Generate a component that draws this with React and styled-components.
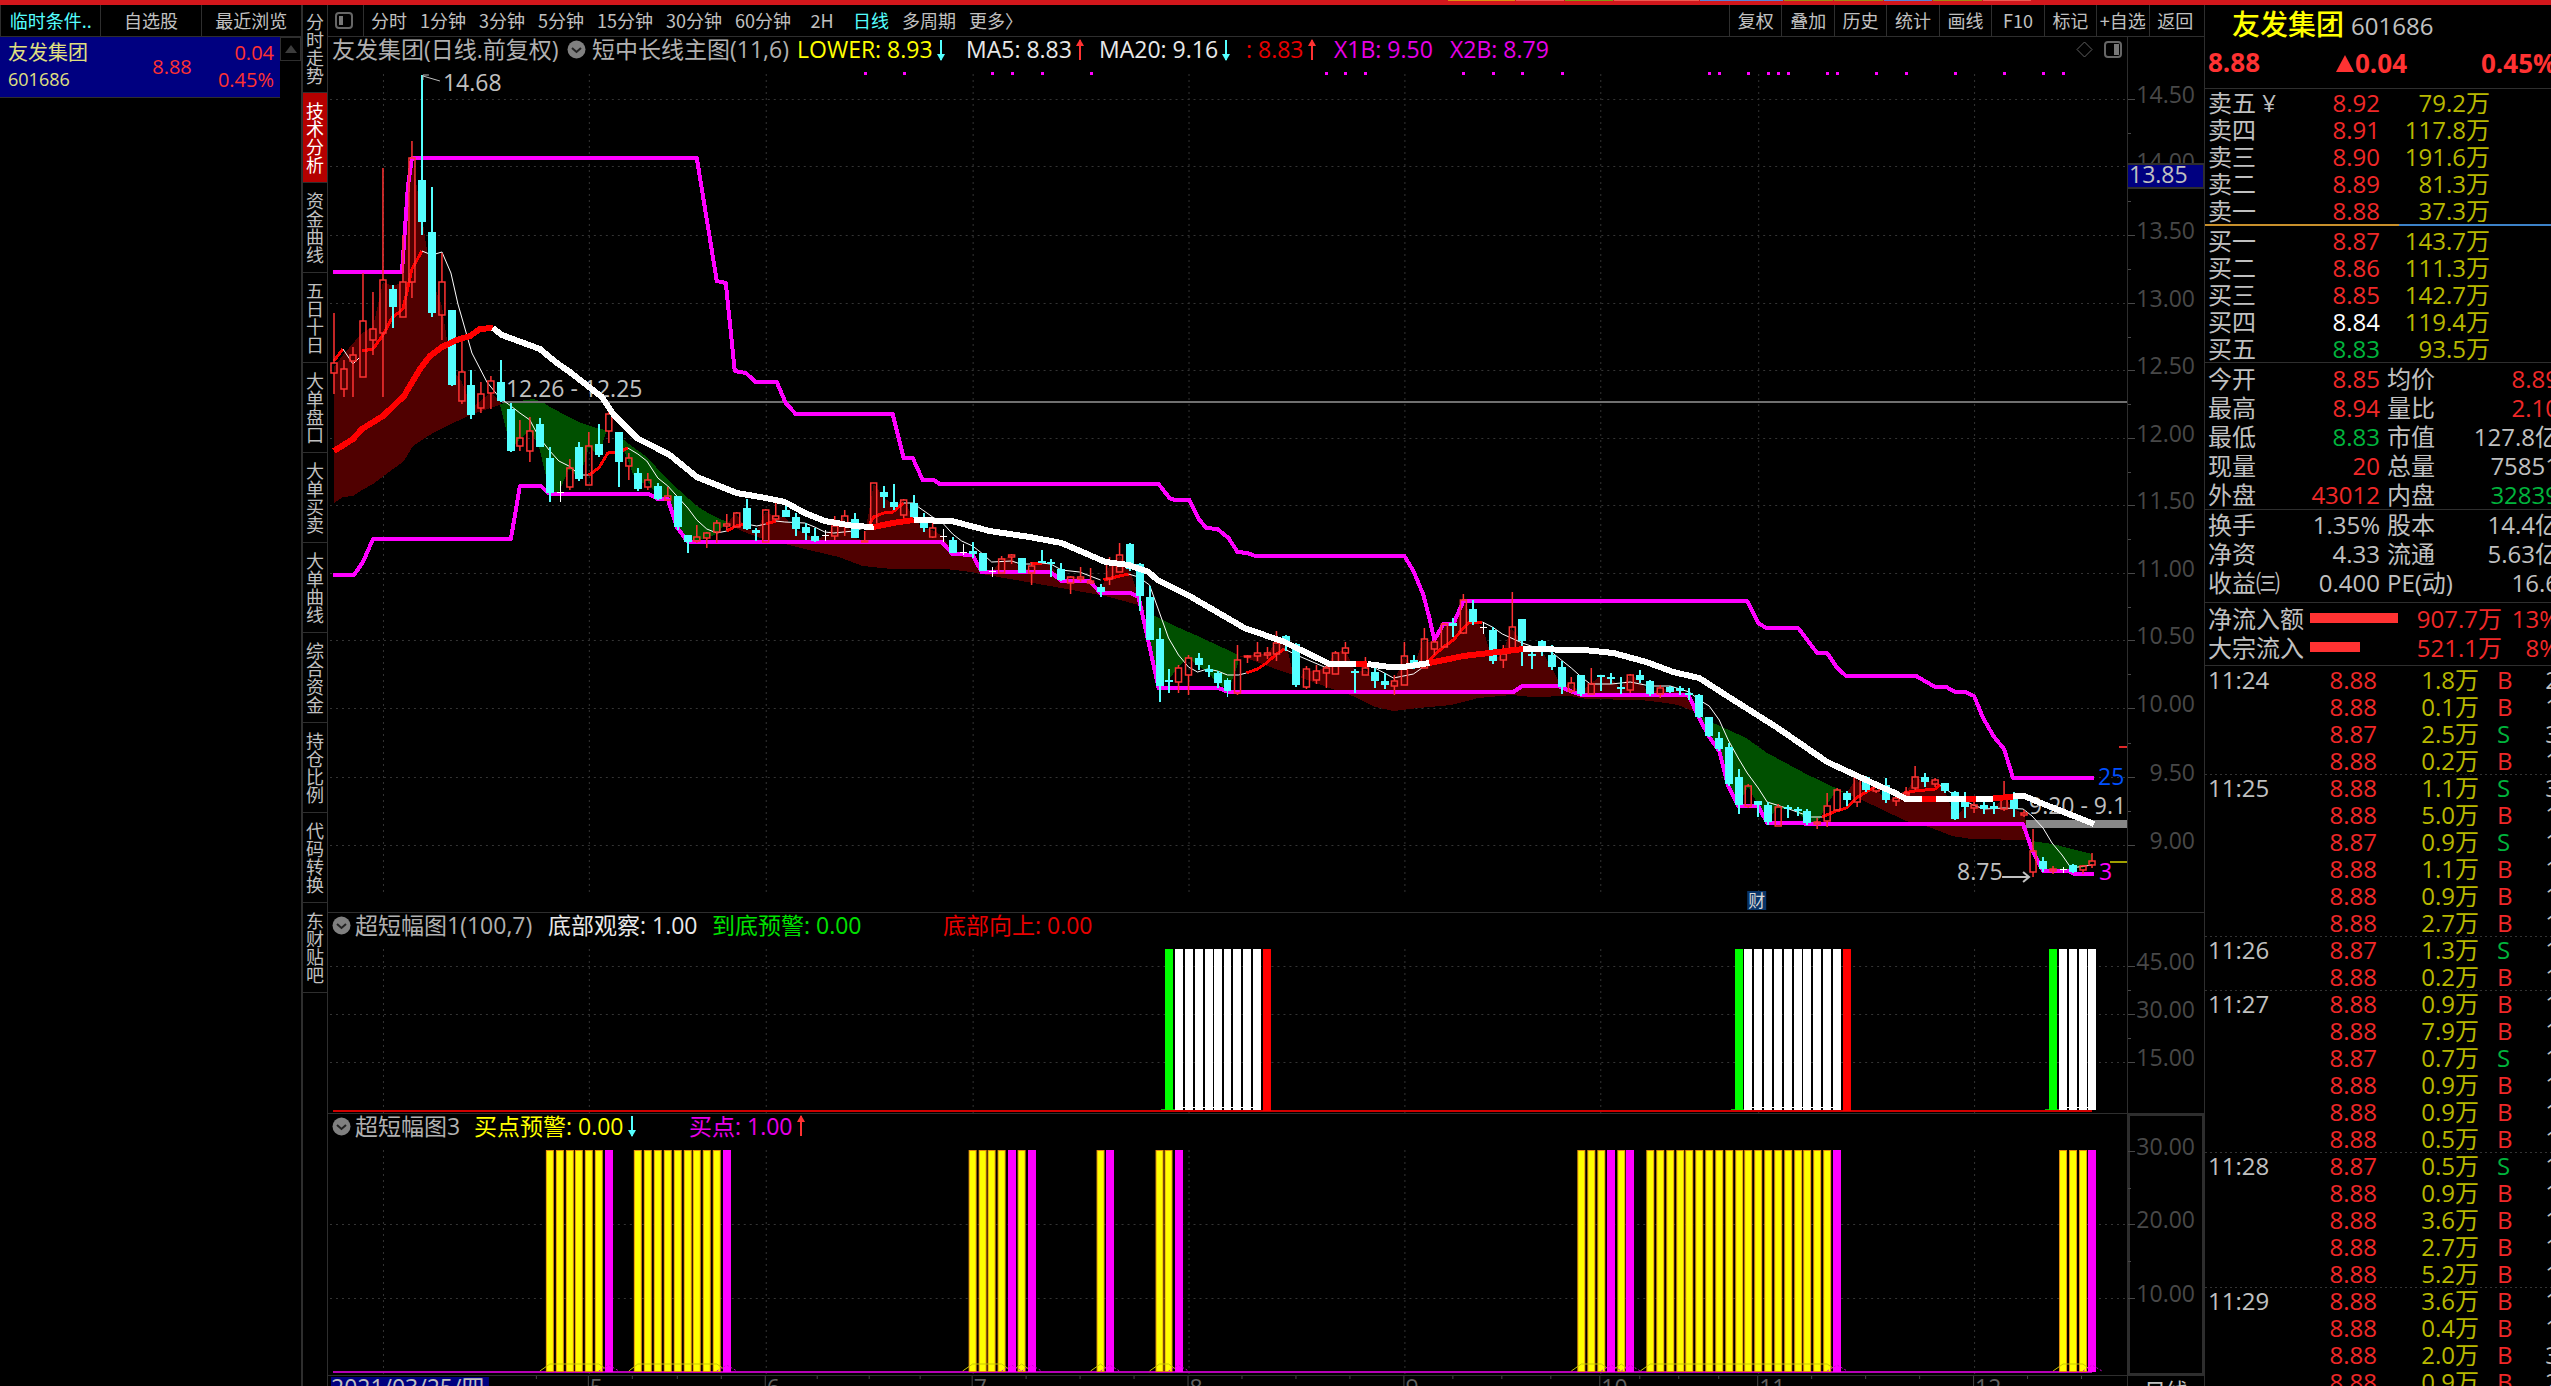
import React from "react";
import styled, { createGlobalStyle } from "styled-components";

const color = {
  text: "#c0c0c0",
  dim: "#484848",
  line: "#2e2e2e",
  red: "#ff3232",
  pureRed: "#ff0000",
  green: "#00b43c",
  lime: "#00e000",
  yellow: "#ffff00",
  olive: "#b8b800",
  cyan: "#54ffff",
  magenta: "#ff00ff",
  navy: "#000080",
  white: "#ffffff",
};

const sans = `"Open Sans", "Noto Sans CJK SC", sans-serif`;
const cjk = `"Noto Sans CJK SC", sans-serif`;

const GlobalStyle = createGlobalStyle`
  * { box-sizing: border-box; }
  body { margin: 0; background: #000; color: ${color.text}; font-family: ${sans}; overflow: hidden; }
  button { font: inherit; color: inherit; background: none; border: 0; padding: 0; margin: 0; cursor: pointer; }
  table { border-collapse: collapse; border-spacing: 0; }
  td, th { padding: 0; font-weight: 400; white-space: nowrap; }
`;

/* ---------- shell ---------- */

const Screen = styled.div`
  display: flex;
  flex-direction: column;
  height: 100vh;
  overflow: hidden;
`;
const Strip = styled.div`
  display: flex;
  justify-content: flex-end;
  gap: 1px;
  flex: none;
  height: 5px;
  padding-right: 520px;
  background: #d2171c;
`;
const StripMark = styled.span`
  width: ${(p) => p.$w}px;
  height: 1px;
  background: ${(p) => p.$c};
`;
const Body = styled.div`
  display: grid;
  grid-template-columns: 301px 27px minmax(0, 1fr) 347px;
  flex: 1;
  min-height: 0;
`;

/* ---------- watch list ---------- */

const Watch = styled.aside`
  min-width: 0;
`;
const WatchTabs = styled.div`
  display: grid;
  grid-template-columns: repeat(3, 1fr);
  height: 32px;
  border-bottom: 1px solid ${color.line};
`;
const WatchTab = styled.button`
  border-left: 1px solid ${color.line};
  padding-bottom: 2px;
  font-family: ${cjk};
  font-size: 18px;
  line-height: 28px;
  color: ${(p) => (p.$on ? color.cyan : color.text)};
  white-space: nowrap;
`;
const WatchBody = styled.div`
  display: flex;
`;
const WatchRow = styled.div`
  display: grid;
  grid-template-columns: 134px 60px 1fr;
  align-items: center;
  flex: 1;
  height: 61px;
  padding: 2px 6px 4px 8px;
  background: ${color.navy};
  border-bottom: 1px solid ${color.line};
  font-size: 20px;
  line-height: 27px;
`;
const WatchCell = styled.div`
  color: ${(p) => p.$c};
  text-align: ${(p) => p.$align || "left"};
`;
const Code = styled.div`
  font-size: 18px;
`;
const ScrollUp = styled.button`
  width: 21px;
  height: 24px;
  border: 1px solid ${color.line};
  display: grid;
  place-items: center;
`;

/* ---------- vertical nav ---------- */

const SideNav = styled.nav`
  display: flex;
  flex-direction: column;
  border-left: 2px solid ${color.line};
  border-right: 1px solid ${color.line};
  overflow: hidden;
`;
const SideItem = styled.button`
  display: flex;
  align-items: center;
  justify-content: center;
  flex: none;
  height: ${(p) => (p.$first ? 88 : 90)}px;
  border-bottom: 1px solid ${color.line};
  background: ${(p) => (p.$on ? "#b40000" : "transparent")};
  color: ${(p) => (p.$on ? "#fff" : color.text)};
  font-family: ${cjk};
  font-size: 18px;
  line-height: 24px;
  writing-mode: vertical-rl;
  text-orientation: upright;
`;

/* ---------- toolbar ---------- */

const Main = styled.main`
  display: flex;
  flex-direction: column;
  min-width: 0;
  min-height: 0;
`;
const Toolbar = styled.div`
  display: flex;
  justify-content: space-between;
  flex: none;
  height: 32px;
  border-bottom: 1px solid ${color.line};
  font-family: ${cjk};
  font-size: 18px;
  line-height: 28px;
`;
const Periods = styled.div`
  display: flex;
  gap: 13px;
`;
const LayoutToggle = styled.button`
  display: grid;
  place-items: center;
  width: 36px;
  padding-right: 3px;
  margin-right: -6px;
  border-right: 1px solid ${color.line};
`;
const Period = styled.button`
  min-width: 36px;
  padding-bottom: 2px;
  color: ${(p) => (p.$on ? color.cyan : color.text)};
  white-space: nowrap;
`;
const Tools = styled.div`
  display: grid;
  grid-template-columns: repeat(9, 1fr);
  width: 475px;
  padding-right: 3px;
`;
const Tool = styled.button`
  border-left: 1px solid ${color.line};
  padding-bottom: 2px;
  white-space: nowrap;
`;

/* ---------- chart panels ---------- */

const Panel = styled.section`
  display: grid;
  grid-template-columns: minmax(0, 1fr) 77px;
  flex: none;
  border-bottom: 1px solid ${color.line};
`;
const Plot = styled.div`
  min-width: 0;
`;
const Scale = styled.div`
  border-left: 1px solid ${color.line};
  box-shadow: ${(p) => (p.$boxed ? `inset 0 0 0 2px ${color.line}` : "none")};
`;
const Legend = styled.header`
  display: flex;
  align-items: center;
  height: ${(p) => p.$h}px;
  padding: 0 0 3px 4px;
  font-size: 23px;
  line-height: 25px;
  white-space: nowrap;
`;
const Readout = styled.span`
  display: inline-flex;
  align-items: center;
  gap: 2px;
  flex: none;
  width: ${(p) => p.$w}px;
  height: 25px;
  color: ${(p) => p.$c || "#b0b0b0"};
`;
const LegendIcons = styled.span`
  display: flex;
  align-items: center;
  gap: 11px;
  margin-left: auto;
  padding-right: 5px;
`;
const RoundToggle = styled.button`
  display: grid;
  place-items: center;
  flex: none;
  width: ${(p) => p.$w}px;
  height: 20px;
  justify-content: start;
`;
const Canvas = styled.svg`
  display: block;
  width: 100%;
  height: ${(p) => p.$h}px;
  font-family: ${sans};
  font-size: 23px;
`;
const Dates = styled.footer`
  display: grid;
  grid-template-columns: minmax(0, 1fr) 77px;
  flex: none;
`;
const PeriodName = styled.div`
  border-left: 1px solid ${color.line};
  text-align: center;
  font-size: 22px;
  line-height: 28px;
`;

/* ---------- quote panel ---------- */

const Quote = styled.aside`
  border-left: 1px solid ${color.line};
  overflow: hidden;
  font-size: 24px;
`;
const Title = styled.div`
  display: flex;
  align-items: baseline;
  gap: 7px;
  height: 40px;
  padding-left: 27px;
  line-height: 38px;
`;
const Name = styled.h1`
  margin: 0;
  font-size: 28px;
  font-weight: 500;
  color: ${color.yellow};
`;
const LastPrice = styled.div`
  display: grid;
  grid-template-columns: 127px 146px 1fr;
  height: 44px;
  padding-left: 3px;
  border-bottom: 1px solid ${color.line};
  font-size: 26px;
  font-weight: 700;
  line-height: 34px;
  color: ${color.red};
`;
const Delta = styled.span`
  display: flex;
  align-items: center;
  height: 36px;
`;
const Sheet = styled.table`
  table-layout: fixed;
  width: 354px;
`;
const Row = styled.tr`
  height: ${(p) => p.$h}px;
  line-height: ${(p) => p.$h}px;
`;
const Label = styled.th`
  text-align: left;
  padding-left: ${(p) => p.$pad || 3}px;
`;
const Num = styled.td`
  text-align: right;
  color: ${(p) => p.$c || color.text};
`;
const Split = styled.div`
  height: 2px;
  margin-bottom: 1px;
  background: linear-gradient(90deg, #c8902c 194px, #3c82c8 194px);
`;
const Block = styled.div`
  border-bottom: 1px solid ${color.line};
  padding: ${(p) => p.$pad || 0};
`;
const FlowBar = styled.div`
  width: ${(p) => p.$w}px;
  height: 10px;
  margin-bottom: 2px;
  background: ${color.red};
`;
const Minute = styled.tbody`
  background: ${(p) =>
    p.$first
      ? "none"
      : "repeating-linear-gradient(90deg, #333 0 2px, transparent 2px 5px) top left / 100% 1px no-repeat"};
`;
const Side = styled.td`
  padding-left: 18px;
  color: ${(p) => (p.$buy ? "#f02828" : color.green)};
`;

/* ---------- data ---------- */

const FIRST_X = 333.7;
const STEP = 9.831;
const barX = (i) => Math.round(FIRST_X + STEP * i);

const months = [
  [383, ""], [589, "5"], [766, "6"], [973, "7"], [1189, "8"],
  [1405, "9"], [1601, "10"], [1759, "11"], [1975, "12"],
];

// kind, high, low, body top, body bottom (r: rising, c: falling, w: unchanged)
const candles = `
r 313 394 363 373,r 360 397 369 389,r 347 397 355 361,r 273 377 321 377,r 292 355 329 340,
r 168 397 280 333,c 285 328 289 307,r 235 317 282 317,r 141 298 158 282,c 75 235 180 222,
c 187 317 232 313,r 253 340 282 315,c 310 386 310 385,r 339 404 372 401,c 370 419 385 415,
r 382 413 394 408,r 376 409 381 393,c 360 402 382 401,c 403 452 409 451,r 420 451 438 446,
r 417 462 431 451,c 418 447 424 447,c 447 502 458 493,w 481 502 492 493,r 459 490 468 487,
c 442 481 447 479,r 432 485 446 485,c 424 457 444 455,r 407 443 414 431,c 432 487 432 462,
r 453 480 458 466,c 468 491 473 489,r 473 490 480 487,c 483 500 486 499,r 487 501 496 500,
c 496 530 496 527,c 535 553 535 542,r 525 543 537 541,r 532 548 533 538,r 520 543 523 532,
r 514 530 524 526,r 512 527 513 527,c 499 530 508 529,c 528 541 530 533,r 509 542 510 542,
r 503 520 516 519,c 502 517 510 517,c 513 536 517 529,c 523 540 527 533,c 528 542 536 541,
w 530 541 535 536,r 516 540 526 536,r 510 536 516 526,c 513 538 519 538,r 531 542 541 542,
r 483 527 483 527,c 486 508 492 497,c 484 510 502 507,r 499 519 500 515,c 495 518 503 517,
c 513 532 517 528,r 519 538 528 537,w 529 542 536 537,c 537 553 540 553,w 544 555 552 553,
c 542 558 551 554,c 553 571 553 571,w 567 577 571 572,r 556 573 559 573,r 554 564 555 557,
c 558 573 558 573,r 562 585 566 573,c 550 563 561 562,c 559 577 562 564,c 563 581 569 580,
r 576 594 577 583,r 567 582 577 579,r 568 584 581 583,c 584 597 587 592,r 557 585 564 579,
r 543 572 555 572,c 543 571 544 569,c 563 611 564 596,c 586 640 597 640,c 628 702 639 686,
c 669 693 680 681,r 665 693 668 682,r 655 695 658 675,c 653 670 658 665,c 665 677 669 672,
c 671 688 673 683,c 678 697 680 691,r 645 695 660 693,r 655 663 656 657,r 642 661 653 656,
r 647 659 653 655,r 631 661 643 654,c 635 651 636 643,c 643 687 644 685,r 666 689 669 687,
r 665 684 671 680,r 663 688 668 673,r 651 674 653 674,r 642 661 648 653,c 669 693 671 673,
r 657 675 668 675,c 667 688 672 681,c 673 689 681 685,r 675 695 681 686,r 642 685 656 685,
c 655 669 660 667,r 628 668 639 668,r 640 655 642 649,r 623 647 624 647,c 618 637 623 626,
r 594 634 600 633,c 600 625 609 622,w 622 634 627 628,c 627 664 630 661,r 645 668 654 660,
r 592 651 627 650,c 619 666 619 641,c 651 669 654 656,c 640 656 641 652,c 645 670 655 667,
c 661 694 667 687,r 677 693 683 691,c 675 696 675 694,r 668 694 684 694,c 675 691 675 676,
c 673 684 677 678,c 677 694 687 689,r 674 693 675 690,c 670 683 675 680,c 680 696 681 694,
r 685 698 688 694,c 686 693 687 692,c 686 695 688 691,c 688 700 693 695,c 694 718 695 717,
c 717 737 717 736,c 732 751 738 749,c 743 786 747 784,c 769 814 777 805,r 784 808 786 806,
c 801 817 801 805,c 802 825 805 822,r 804 826 807 826,c 805 818 807 809,c 807 816 809 811,
c 809 825 811 823,r 818 829 822 824,r 793 827 806 821,r 788 811 790 810,c 791 806 793 800,
r 777 807 778 802,c 776 792 777 790,r 784 793 787 791,c 778 803 785 800,r 792 806 798 801,
r 787 797 793 795,r 766 790 777 788,c 773 787 777 782,r 778 787 780 784,c 783 793 783 791,
c 791 820 792 819,c 792 818 797 807,r 801 813 805 808,c 802 814 805 809,c 802 814 806 809,
r 781 811 796 809,c 792 817 795 809,r 810 817 813 815,r 829 877 851 872,c 857 872 861 869,
r 866 874 869 871,w 867 873 869 870,c 864 873 865 872,r 865 874 866 870,r 853 868 861 865`
  .trim()
  .split(",")
  .map((row) => {
    const [kind, ...v] = row.trim().split(" ");
    return [kind, ...v.map(Number)];
  });

const upperBand =
  "333,272 402,272 408,186 412,158 697,158 717,281 726,283 735,371 746,373 756,382 777,382 786,403 796,414 893,414 904,458 913,458 923,480 934,480 940,484 1159,484 1170,498 1175,500 1190,500 1199,519 1207,528 1218,529 1229,538 1238,552 1248,553 1256,556 1405,556 1414,571 1424,595 1430,618 1435,640 1444,624 1454,624 1464,601 1748,601 1759,623 1767,628 1799,628 1818,653 1828,653 1838,668 1847,676 1917,676 1936,687 1947,687 1956,692 1966,692 1975,696 1984,718 1995,737 2005,749 2014,778 2095,778";
const lowerBand =
  "333,575 354,575 363,562 373,539 511,539 520,486 541,486 547,492 551,494 649,494 658,499 668,499 677,527 688,542 942,542 953,554 973,555 982,572 1051,572 1062,581 1090,581 1101,593 1131,593 1139,597 1147,633 1159,688 1219,688 1229,692 1514,692 1523,686 1559,686 1571,691 1582,695 1689,695 1700,718 1710,737 1720,751 1729,786 1739,806 1759,806 1768,823 1801,823 1808,824 2024,824 2033,850 2044,871 2070,871 2075,874 2095,874";

const slowLine = [
  ["red", "334,451 353,439 362,429 383,416 404,396 420,369 430,356 442,347 457,340 470,336 480,329 493,328"],
  ["white", "493,328 502,335 540,349 557,363 570,372 602,397 614,415 637,438 670,455 697,477 737,493 766,498 785,502 805,513 825,521 854,526 874,527"],
  ["red", "874,527 893,523 914,520"],
  ["white", "914,520 952,521 990,531 1030,537 1062,543 1106,562 1129,565 1149,572 1158,580 1190,596 1245,628 1285,642 1330,664 1357,664"],
  ["red", "1357,664 1368,664"],
  ["white", "1368,664 1390,667 1404,667 1430,663"],
  ["red", "1430,663 1464,656 1524,649"],
  ["white", "1524,649 1585,650 1614,653 1647,662 1674,672 1700,678 1728,696 1777,727 1828,762 1880,786 1896,793 1907,799 1923,799"],
  ["red", "1923,799 1937,799"],
  ["white", "1937,799 1967,799"],
  ["red", "1967,799 1977,799"],
  ["white", "1977,799 1994,799"],
  ["red", "1994,798 2014,797"],
  ["white", "2014,796 2025,796 2042,803 2095,824"],
];

const fastLine = [
  ["red", "334,361 343,349"],
  ["white", "343,349 353,364 359,358"],
  ["red", "362,351 373,349 383,335 392,318 403,309 407,292 412,269 422,251"],
  ["white", "422,251 432,255 442,252 451,273 458,304 472,353 487,382 500,398 511,406 520,413 530,420 539,437 550,451 559,461 569,466 580,475 589,475"],
  ["red", "589,475 599,468 608,453 619,452 628,448"],
  ["white", "628,448 638,454 647,461 658,478 668,486 677,496 688,508 697,520 707,529 717,533 727,531"],
  ["red", "727,531 736,526 746,524"],
  ["white", "746,524 757,526 766,524"],
  ["red", "766,524 776,521"],
  ["white", "776,521 785,522 805,523 815,527 825,532 834,533 854,531 864,528"],
  ["red", "870,524 874,517 884,513 893,512 904,503"],
  ["white", "904,503 913,503 933,517 943,523 953,534 962,541 973,546 982,553 992,562 1012,561 1021,564 1031,564"],
  ["red", "1031,564 1042,563"],
  ["white", "1042,563 1051,564 1062,570 1080,572 1101,580"],
  ["red", "1104,580 1120,576 1129,574"],
  ["white", "1129,574 1139,577 1150,585 1159,610 1169,638 1179,655 1189,667 1198,672 1208,669 1218,671 1228,675 1239,675 1247,673"],
  ["red", "1247,673 1258,669 1267,663 1277,654 1285,649"],
  ["white", "1285,649 1297,655 1325,667 1337,664 1346,662 1366,663 1385,673 1394,678 1414,674 1424,667"],
  ["red", "1424,667 1435,655 1444,647 1454,640 1464,628 1470,622 1483,622"],
  ["white", "1483,622 1493,627 1503,634 1523,643 1543,650 1552,652 1562,660 1572,668 1582,677 1591,684 1612,684 1631,682 1651,686 1671,686 1690,692 1700,700 1710,706 1720,720 1729,740 1739,758 1748,773 1759,788 1768,802 1787,808 1798,812 1812,817 1823,817"],
  ["red", "1823,817 1837,811 1847,808 1857,798 1867,792 1876,787"],
  ["white", "1876,787 1886,789 1897,794"],
  ["red", "1905,793 1916,791 1936,789 1941,785"],
  ["white", "1941,785 1955,795 1974,805 1985,809 2005,808 2024,809 2033,816 2044,828 2053,843 2063,855 2072,868 2093,865"],
];

const clouds = [
  ["up", "334,367 343,355 362,333 373,327 383,282 393,286 403,282 412,159 422,216 431,278 442,306 451,367 462,382 472,408 491,392 502,404 491,408 472,414 462,419 451,424 433,433 422,440 413,446 404,461 373,484 362,490 353,496 343,497 334,503"],
  ["down", "500,404 533,399 543,402 550,407 579,422 600,429 607,430 599,455 589,447 580,478 569,469 559,492 550,493 539,446 530,430 520,439 511,449"],
  ["down", "618,435 633,447 647,457 658,469 677,488 697,506 710,514 727,522 717,534 700,540 688,542 677,527 668,500 658,497 647,480 638,487 628,460"],
  ["up", "727,524 736,513 746,529 757,531 766,511 776,518 785,517 795,529 805,533 815,540 825,536 834,527 844,517 854,537 864,541 874,484 884,497 894,506 904,500 913,517 923,528 933,530 943,536 953,552 962,552 973,554 982,571 993,571 1002,559 1012,556 1022,572 1031,567 1041,562 1051,564 1061,580 1071,577 1081,578 1090,583 1101,592 1110,565 1120,556 1130,569 1139,596 1146,612 1139,605 1106,596 1039,584 993,576 972,572 946,569 892,569 863,566 839,557 805,549 785,544 766,540 747,533"],
  ["down", "1146,611 1153,615 1173,625 1196,635 1239,655 1239,662 1229,691 1218,683 1208,672 1198,665 1188,658 1178,668 1169,680 1159,686 1150,640"],
  ["up", "1239,656 1258,654 1267,654 1277,643 1286,640 1296,685 1306,670 1316,671 1326,668 1335,653 1346,650 1356,672 1366,670 1375,680 1385,684 1395,682 1404,657 1414,667 1424,640 1434,643 1444,624 1454,625 1464,600 1474,621 1483,627 1493,660 1503,655 1512,628 1522,641 1532,654 1542,650 1552,667 1562,687 1571,683 1581,693 1591,684 1601,676 1611,678 1621,688 1631,675 1640,680 1650,694 1660,689 1680,690 1690,695 1694,711 1679,705 1660,702 1641,700 1587,699 1571,696 1533,697 1512,695 1479,698 1452,705 1419,708 1394,711 1376,707 1351,695 1330,688 1297,676 1276,669 1247,658"],
  ["down", "1700,714 1712,722 1747,738 1768,753 1807,774 1847,793 1837,791 1827,806 1818,823 1808,823 1798,811 1788,809 1778,808 1768,821 1759,805 1749,787 1739,805 1730,784 1720,749 1710,736"],
  ["up", "1847,794 1857,779 1867,790 1876,787 1886,800 1896,798 1906,794 1916,777 1926,782 1936,780 1946,791 1956,819 1966,806 1975,805 1995,808 2005,797 2015,809 2025,814 2031,840 1972,839 1953,836 1930,827 1907,821 1865,801"],
  ["down", "2033,841 2053,844 2093,854 2093,862 2083,868 2063,869 2044,869 2034,852"],
];

const signals = [54, 58, 67, 69, 72, 77, 101, 103, 105, 115, 118, 121, 125, 140, 141, 144, 146, 147, 148, 152, 153, 157, 160, 165, 170, 174, 176];

const priceTicks = [
  [99, "14.50"], [166, "14.00"], [235, "13.50"], [303, "13.00"], [370, "12.50"], [438, "12.00"],
  [505, "11.50"], [573, "11.00"], [640, "10.50"], [708, "10.00"], [777, "9.50"], [845, "9.00"],
];
const bottomTicks = [[966, "45.00"], [1014, "30.00"], [1062, "15.00"]];
const buyTicks = [[1151, "30.00"], [1224, "20.00"], [1298, "10.00"]];

const bottomRuns = [[85, 94, 95], [143, 153, 154], [175, 179, null]];
const warnRuns = [[22, 27], [31, 39], [65, 68], [70, 70], [78, 78], [84, 85], [127, 129], [131, 131], [134, 152], [176, 178]];
const buyBars = [28, 40, 69, 71, 79, 86, 130, 132, 153, 179];

const range = (a, b) => Array.from({ length: b - a + 1 }, (_, k) => a + k);

/* ---------- icons ---------- */

const Arrow = ({ up }) => (
  <svg width="12" height="24" viewBox="0 0 12 24" aria-hidden="true">
    <g transform={up ? undefined : "rotate(180 6 12)"} fill={up ? color.red : color.cyan}>
      <rect x="5" y="2" width="2" height="20" />
      <path d="M6 1 L10 8 H2 Z" />
    </g>
  </svg>
);

const Toggle = ({ w, label }) => (
  <RoundToggle $w={w} aria-label={label}>
    <svg width="19" height="19" viewBox="0 0 19 19">
      <circle cx="9.5" cy="9.5" r="9" fill="#808080" />
      <path d="M5 8 L9.5 12 L14 8" fill="none" stroke="#222" strokeWidth="2" />
    </svg>
  </RoundToggle>
);

/* ---------- chart pieces ---------- */

const Grid = ({ ticks, top, bottom }) => (
  <g stroke="#343434" strokeWidth="1" strokeDasharray="2 4">
    {ticks.map(([y]) => (
      <line key={y} x1="330" x2="2128" y1={y + 0.5} y2={y + 0.5} />
    ))}
    {months.map(([x]) => (
      <line key={x} x1={x + 0.5} x2={x + 0.5} y1={top} y2={bottom} />
    ))}
  </g>
);

const ScaleMarks = ({ ticks }) => (
  <>
    <g stroke="#484848">
      {ticks.map(([y], k) => {
        const next = ticks[k + 1];
        const mid = next ? Math.round((y + next[0]) / 2) : null;
        return (
          <React.Fragment key={y}>
            <line x1="2129" x2="2136" y1={y + 0.5} y2={y + 0.5} />
            {mid && <line x1="2129" x2="2132" y1={mid + 0.5} y2={mid + 0.5} />}
          </React.Fragment>
        );
      })}
    </g>
    {ticks.map(([y, t]) => (
      <text key={t} x="2196" y={y + 4} textAnchor="end" fill={color.dim}>{t}</text>
    ))}
  </>
);

const Candle = ({ x, data: [kind, high, low, top, bottom] }) => {
  if (kind === "c")
    return (
      <g fill={color.cyan} shapeRendering="crispEdges">
        <rect x={x - 1} y={high} width="2" height={low - high} />
        <rect x={x - 4} y={top} width="8" height={Math.max(bottom - top, 2)} />
      </g>
    );
  if (kind === "w")
    return (
      <g fill={color.white} shapeRendering="crispEdges">
        <rect x={x} y={high} width="1" height={low - high} />
        <rect x={x - 3} y={top} width="7" height="1" />
      </g>
    );
  return (
    <g fill="none" stroke={color.red} strokeWidth="1.5">
      <path d={`M${x} ${high}V${top}M${x} ${bottom}V${low}`} />
      <rect x={x - 3} y={top} width="6" height={Math.max(bottom - top, 1)} />
    </g>
  );
};

const PricePlot = () => (
  <Canvas $h={847} viewBox="328 65 1800 847" preserveAspectRatio="none" role="img" aria-label="日线K线图">
    <g shapeRendering="crispEdges">
      <Grid ticks={priceTicks} top={74} bottom={893} />
      {clouds.map(([k, pts]) => (
        <polygon key={pts} points={pts} fill={k === "up" ? "#500000" : "#005000"} />
      ))}
      <rect x="502" y="401" width="1626" height="2" fill="#707070" />
      <rect x="2027" y="820" width="101" height="8" fill="#888" />
      <g fill="none" stroke={color.magenta} strokeWidth="4" strokeLinejoin="round">
        <polyline points={upperBand} />
        <polyline points={lowerBand} />
      </g>
      {fastLine.map(([c, pts]) => (
        <polyline key={pts} points={pts} fill="none" stroke={c} strokeWidth={c === "red" ? 3 : 1} />
      ))}
      {signals.map((i) => (
        <rect key={i} x={barX(i) - 1} y="72" width="3" height="3" fill={color.magenta} />
      ))}
    </g>
    <g fill={color.text}>
      <text x="443" y="91">14.68</text>
      <text x="506" y="397">12.26 - 12.25</text>
      <text x="2030" y="814">9.20 - 9.1</text>
      <text x="1958" y="880">8.75</text>
    </g>
    <g>
      {candles.map((c, i) => (
        <Candle key={i} x={barX(i)} data={c} />
      ))}
      {slowLine.map(([c, pts]) => (
        <polyline
          key={pts}
          points={pts}
          fill="none"
          stroke={c}
          strokeWidth="6"
          strokeLinejoin="round"
          shapeRendering="crispEdges"
        />
      ))}
    </g>
    <g fill="none" stroke={color.text}>
      <path d="M429 75 H423 V80 M423 76 L440 81" />
      <path strokeWidth="2" d="M2003 877 H2030 M2024 872 L2030 877 L2024 882" />
    </g>
    <rect x="2120" y="746" width="8" height="2" fill="#e02828" />
    <rect x="2111" y="861" width="17" height="2" fill="#a0a000" />
    <text x="2099" y="785" fill="#0050ff">25</text>
    <text x="2100" y="880" fill={color.magenta}>3</text>
    <rect x="1748" y="891" width="19" height="19" fill="#083468" />
    <text x="1749" y="907" fontSize="17" fill="#d8d8d8">财</text>
  </Canvas>
);

const PriceScale = () => (
  <Canvas $h={875} viewBox="2129 37 76 875" preserveAspectRatio="none">
    <ScaleMarks ticks={priceTicks} />
    <rect x="2129" y="163" width="76" height="26" fill={color.line} />
    <rect x="2129" y="165" width="75" height="22" fill={color.navy} />
    <text x="2130" y="183" fill={color.text}>13.85</text>
  </Canvas>
);

const BottomPlot = () => (
  <Canvas $h={172} viewBox="328 941 1800 172" preserveAspectRatio="none" shapeRendering="crispEdges" role="img" aria-label="超短幅图1">
    <Grid ticks={bottomTicks} top={949} bottom={1113} />
    <rect x="333" y="1110" width="1760" height="2" fill="#d00000" />
    {bottomRuns.map(([start, end, stop]) => (
      <g key={start}>
        <rect x={barX(start) - 8} y="1109" width="14" height="1" fill="#00c000" />
        <rect x={barX(start + 1)} y="1107" width={barX(end) - barX(start + 1)} height="1" fill="#fff" />
        <rect x={barX(start) - 4} y="949" width="8" height="161" fill="#00ff00" />
        {range(start + 1, end).map((i) => (
          <rect key={i} x={barX(i) - 4} y="949" width="8" height="161" fill="#fff" />
        ))}
        {stop && <rect x={barX(stop) - 4} y="949" width="8" height="162" fill="#ff0000" />}
      </g>
    ))}
  </Canvas>
);

const BuyPlot = () => (
  <Canvas $h={234} viewBox="328 1141 1800 234" preserveAspectRatio="none" shapeRendering="crispEdges" role="img" aria-label="超短幅图3">
    <Grid ticks={buyTicks.slice(1)} top={1150} bottom={1375} />
    <rect x="333" y="1371" width="1760" height="2" fill="#b400b4" />
    {warnRuns.map(([a, b]) => (
      <g key={a}>
        {range(a, b).map((i) => (
          <rect key={i} x={barX(i) - 3.5} y="1150.500" width="7" height="221" fill="#ffff00" stroke="#e89010" />
        ))}
        <polyline
          points={`${barX(a - 1)},1371 ${barX(a)},1364 ${barX(b)},1364 ${barX(b + 1)},1371`}
          fill="none"
          stroke="#c8c800"
        />
      </g>
    ))}
    {buyBars.map((i) => (
      <g key={i}>
        <rect x={barX(i) - 4} y="1150" width="8" height="222" fill={color.magenta} />
        <polyline
          points={`${barX(i - 1)},1371 ${barX(i)},1365 ${barX(i + 1)},1371`}
          fill="none"
          stroke="#d000d0"
          strokeDasharray="2 2"
        />
      </g>
    ))}
  </Canvas>
);

const DateAxis = () => (
  <Canvas $h={26} viewBox="328 1376 1800 26" preserveAspectRatio="none">
    <g stroke="#484848">
      {months.slice(1).map(([x], k, list) => {
        const w = (list[k + 1] ? list[k + 1][0] : x + 216) - x;
        return (
          <path
            key={x}
            d={`M${x - 0.5} 1376V1402` + [1, 2, 3].map((q) => `M${Math.round(x + (w * q) / 4) - 0.5} 1376V1379`).join("")}
          />
        );
      })}
      <path d="M536.500 1376V1379" />
    </g>
    {months.slice(1).map(([x, t]) => (
      <text key={t} x={x + 1} y="1396" fill="#606060">{t}</text>
    ))}
    <rect x="331" y="1377" width="158" height="25" fill={color.navy} />
    <text x="331" y="1396" fill={color.text}>2021/03/25/四</text>
  </Canvas>
);

/* ---------- quote data ---------- */

const asks = [["卖五 ¥", "8.92", "79.2万"], ["卖四", "8.91", "117.8万"], ["卖三", "8.90", "191.6万"], ["卖二", "8.89", "81.3万"], ["卖一", "8.88", "37.3万"]];
const bids = [["买一", "8.87", "143.7万"], ["买二", "8.86", "111.3万"], ["买三", "8.85", "142.7万"], ["买四", "8.84", "119.4万"], ["买五", "8.83", "93.5万"]];
const R = "#f02828";
const G = color.green;
const T = color.text;
const today = [
  ["今开", "8.85", R, "均价", "8.89", R],
  ["最高", "8.94", R, "量比", "2.10", R],
  ["最低", "8.83", G, "市值", "127.8亿", T],
  ["现量", "20", R, "总量", "75851", T],
  ["外盘", "43012", R, "内盘", "32839", G],
];
const basics = [
  ["换手", "1.35%", T, "股本", "14.4亿", T],
  ["净资", "4.33", T, "流通", "5.63亿", T],
  ["收益㈢", "0.400", T, "PE(动)", "16.6", T],
];
const flows = [["净流入额", 88, "907.7万", "13%"], ["大宗流入", 50, "521.1万", "8%"]];
const trades = [
  ["11:24", "8.88 1.8 B 2", "8.88 0.1 B 1", "8.87 2.5 S 3", "8.88 0.2 B 1"],
  ["11:25", "8.88 1.1 S 3", "8.88 5.0 B 1", "8.87 0.9 S 1", "8.88 1.1 B 1", "8.88 0.9 B 1", "8.88 2.7 B 1"],
  ["11:26", "8.87 1.3 S 1", "8.88 0.2 B 1"],
  ["11:27", "8.88 0.9 B 1", "8.88 7.9 B 1", "8.87 0.7 S 1", "8.88 0.9 B 1", "8.88 0.9 B 1", "8.88 0.5 B 1"],
  ["11:28", "8.87 0.5 S 1", "8.88 0.9 B 1", "8.88 3.6 B 1", "8.88 2.7 B 1", "8.88 5.2 B 1"],
  ["11:29", "8.88 3.6 B 1", "8.88 0.4 B 1", "8.88 2.0 B 3", "8.88 0.9 B 2"],
];

const priceColor = (p) => (p === "8.84" ? color.white : p < "8.84" ? G : R);

const Col = styled.col`
  width: ${(p) => p.$w}px;
`;

const Depth = ({ rows }) => (
  <Sheet>
    <colgroup>
      <Col $w={93} />
      <Col $w={82} />
      <Col $w={110} />
      <col />
    </colgroup>
    <tbody>
      {rows.map(([label, price, vol]) => (
        <Row key={label} $h={27}>
          <Label scope="row">{label}</Label>
          <Num $c={priceColor(price)}>{price}</Num>
          <Num $c={color.olive}>{vol}</Num>
          <td />
        </Row>
      ))}
    </tbody>
  </Sheet>
);

const Facts = ({ rows }) => (
  <Sheet>
    <colgroup>
      <Col $w={83} />
      <Col $w={92} />
      <Col $w={85} />
      <col />
    </colgroup>
    <tbody>
      {rows.map(([a, av, ac, b, bv, bc]) => (
        <Row key={a} $h={29}>
          <Label scope="row">{a}</Label>
          <Num $c={ac}>{av}</Num>
          <Label scope="row" $pad={7}>{b}</Label>
          <Num $c={bc}>{bv}</Num>
        </Row>
      ))}
    </tbody>
  </Sheet>
);

const periods = ["分时", "1分钟", "3分钟", "5分钟", "15分钟", "30分钟", "60分钟", "2H", "日线", "多周期", "更多〉"];
const tools = ["复权", "叠加", "历史", "统计", "画线", "F10", "标记", "+自选", "返回"];
const views = ["分时走势", "技术分析", "资金曲线", "五日十日", "大单盘口", "大单买卖", "大单曲线", "综合资金", "持仓比例", "代码转换", "东财贴吧"];
const strip = [
  [67, "#dc9010"], [48, "#ee5a50"], [48, "#809a10"], [85, "#ee5a50"], [83, "#5a82d8"], [49, "#a08a10"],
  [49, "#a08a10"], [48, "#5a82d8"], [49, "#a08a10"], [48, "#ee5a50"],
];

export default function App() {
  return (
    <Screen>
      <GlobalStyle />
      <Strip>
        {strip.map(([w, c], k) => (
          <StripMark key={k} $w={w} $c={c} />
        ))}
      </Strip>
      <Body>
        <Watch>
          <WatchTabs>
            <WatchTab $on>临时条件..</WatchTab>
            <WatchTab>自选股</WatchTab>
            <WatchTab>最近浏览</WatchTab>
          </WatchTabs>
          <WatchBody>
            <WatchRow>
              <WatchCell $c="#e0e080">
                友发集团
                <Code>601686</Code>
              </WatchCell>
              <WatchCell $c={color.red} $align="center">8.88</WatchCell>
              <WatchCell $c={color.red} $align="right">
                0.04
                <br />
                0.45%
              </WatchCell>
            </WatchRow>
            <ScrollUp aria-label="向上滚动">
              <svg width="12" height="8" viewBox="0 0 12 8">
                <path d="M6 0 L12 8 H0 Z" fill="#3c3c3c" />
              </svg>
            </ScrollUp>
          </WatchBody>
        </Watch>

        <SideNav>
          {views.map((v, k) => (
            <SideItem key={v} $first={k === 0} $on={k === 1}>{v}</SideItem>
          ))}
        </SideNav>

        <Main>
          <Toolbar>
            <Periods>
              <LayoutToggle aria-label="切换布局">
                <svg width="18" height="17" viewBox="0 0 18 17">
                  <rect x="1" y="1" width="16" height="15" rx="3" fill="none" stroke="#666" strokeWidth="2" />
                  <rect x="4" y="4" width="4" height="9" fill="#777" />
                </svg>
              </LayoutToggle>
              {periods.map((p) => (
                <Period key={p} $on={p === "日线"}>{p}</Period>
              ))}
            </Periods>
            <Tools>
              {tools.map((t) => (
                <Tool key={t}>{t}</Tool>
              ))}
            </Tools>
          </Toolbar>

          <Panel>
            <Plot>
              <Legend $h={28}>
                <Readout $w={235}>友发集团(日线.前复权)</Readout>
                <Toggle w={25} label="主图指标" />
                <Readout $w={205}>短中长线主图(11,6)</Readout>
                <Readout $w={169} $c={color.yellow}>LOWER: 8.93<Arrow /></Readout>
                <Readout $w={133} $c="#e8e8e8">MA5: 8.83<Arrow up /></Readout>
                <Readout $w={147} $c="#e8e8e8">MA20: 9.16<Arrow /></Readout>
                <Readout $w={88} $c="#e80000">: 8.83<Arrow up /></Readout>
                <Readout $w={116} $c="#e800e8">X1B: 9.50</Readout>
                <Readout $w={116} $c="#e800e8">X2B: 8.79</Readout>
                <LegendIcons>
                  <svg width="17" height="17" viewBox="0 0 17 17">
                    <path d="M8.500 1 L16 8.500 L8.500 16 L1 8.500 Z" fill="none" stroke="#606060" />
                  </svg>
                  <svg width="18" height="17" viewBox="0 0 18 17">
                    <rect x="1" y="1" width="16" height="15" rx="3" fill="none" stroke="#666" strokeWidth="2" />
                    <rect x="10" y="3" width="5" height="11" fill="#777" />
                  </svg>
                </LegendIcons>
              </Legend>
              <PricePlot />
            </Plot>
            <Scale>
              <PriceScale />
            </Scale>
          </Panel>

          <Panel>
            <Plot>
              <Legend $h={28}>
                <Toggle w={23} label="副图指标一" />
                <Readout $w={193}>超短幅图1(100,7)</Readout>
                <Readout $w={164} $c="#e8e8e8">底部观察: 1.00</Readout>
                <Readout $w={231} $c={color.lime}>到底预警: 0.00</Readout>
                <Readout $w={164} $c="#e80000">底部向上: 0.00</Readout>
              </Legend>
              <BottomPlot />
            </Plot>
            <Scale>
              <Canvas $h={200} viewBox="2129 913 76 200" preserveAspectRatio="none">
                <ScaleMarks ticks={bottomTicks} />
              </Canvas>
            </Scale>
          </Panel>

          <Panel>
            <Plot>
              <Legend $h={27}>
                <Toggle w={23} label="副图指标二" />
                <Readout $w={119}>超短幅图3</Readout>
                <Readout $w={215} $c={color.yellow}>买点预警: 0.00<Arrow /></Readout>
                <Readout $w={164} $c="#e800e8">买点: 1.00<Arrow up /></Readout>
              </Legend>
              <BuyPlot />
            </Plot>
            <Scale $boxed>
              <Canvas $h={261} viewBox="2129 1114 76 261" preserveAspectRatio="none">
                <ScaleMarks ticks={buyTicks} />
              </Canvas>
            </Scale>
          </Panel>

          <Dates>
            <DateAxis />
            <PeriodName>日线</PeriodName>
          </Dates>
        </Main>

        <Quote>
          <Title>
            <Name>友发集团</Name>
            <span>601686</span>
          </Title>
          <LastPrice>
            <span>8.88</span>
            <Delta>
              <svg width="20" height="17" viewBox="0 0 20 17" aria-hidden="true">
                <path d="M10 0 L19 17 H1 Z" fill={color.red} />
              </svg>
              0.04
            </Delta>
            <Delta>0.45%</Delta>
          </LastPrice>
          <Depth rows={asks} />
          <Split />
          <Block>
            <Depth rows={bids} />
          </Block>
          <Block $pad="1px 0 0">
            <Facts rows={today} />
          </Block>
          <Block $pad="0 0 5px">
            <Facts rows={basics} />
          </Block>
          <Block $pad="1px 0 3px">
            <Sheet>
              <colgroup>
                <Col $w={105} />
                <Col $w={91} />
                <Col $w={101} />
                <col />
              </colgroup>
              <tbody>
                {flows.map(([label, w, amount, pct]) => (
                  <Row key={label} $h={29}>
                    <Label scope="row">{label}</Label>
                    <td>
                      <FlowBar $w={w} />
                    </td>
                    <Num $c={R}>{amount}</Num>
                    <Num $c={R}>{pct}</Num>
                  </Row>
                ))}
              </tbody>
            </Sheet>
          </Block>
          <Sheet>
            <colgroup>
              <Col $w={90} />
              <Col $w={82} />
              <Col $w={102} />
              <Col $w={50} />
              <col />
            </colgroup>
            {trades.map(([time, ...rows], g) => (
              <Minute key={time} $first={g === 0}>
                {rows.map((r, k) => {
                  const [price, vol, side, n] = r.split(" ");
                  return (
                    <Row key={k} $h={27}>
                      <Label scope="row">{k === 0 ? time : ""}</Label>
                      <Num $c={R}>{price}</Num>
                      <Num $c={color.olive}>{vol}万</Num>
                      <Side $buy={side === "B"}>{side}</Side>
                      <Num>{n}</Num>
                    </Row>
                  );
                })}
              </Minute>
            ))}
          </Sheet>
        </Quote>
      </Body>
    </Screen>
  );
}
